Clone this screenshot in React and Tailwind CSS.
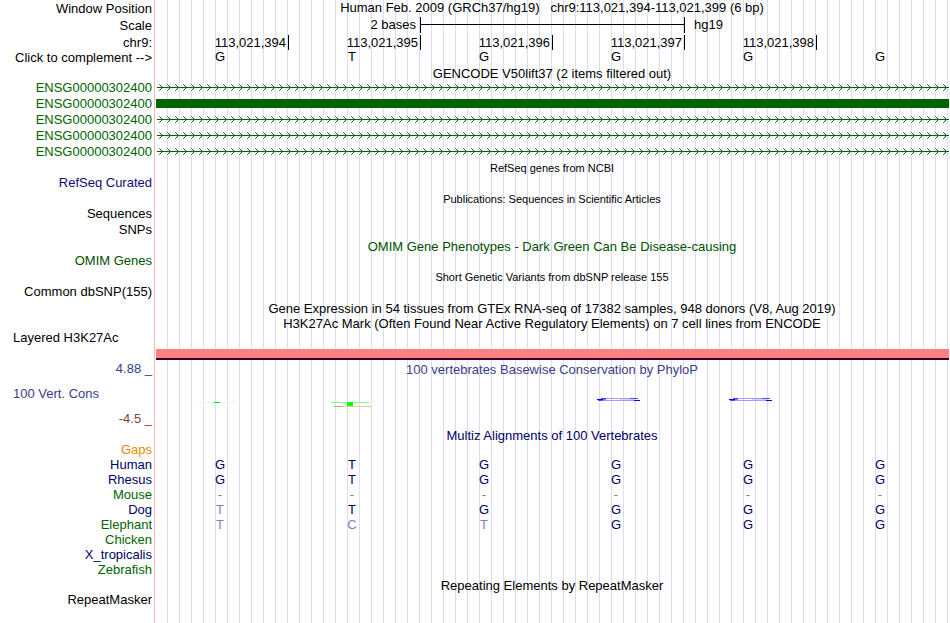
import React, { useState } from 'react';

const complement = { G: 'C', C: 'G', A: 'T', T: 'A' };
const bases = ['G', 'T', 'G', 'G', 'G', 'G'];
const positions = ['113,021,394', '113,021,395', '113,021,396', '113,021,397', '113,021,398', ''];
const geneRows = ['line', 'block', 'line', 'line', 'line'];

const NAVY = 'text-[#000064]';
const GREEN = 'text-[#006400]';

const species = [
  { name: 'Gaps', color: 'text-[#e68a00]', seq: '      ' },
  { name: 'Human', color: NAVY, seq: 'GTGGGG' },
  { name: 'Rhesus', color: NAVY, seq: 'GTGGGG' },
  { name: 'Mouse', color: GREEN, seq: '------' },
  { name: 'Dog', color: NAVY, seq: 'TTGGGG' },
  { name: 'Elephant', color: GREEN, seq: 'TCTGGG' },
  { name: 'Chicken', color: GREEN, seq: '      ' },
  { name: 'X_tropicalis', color: NAVY, seq: '      ' },
  { name: 'Zebrafish', color: GREEN, seq: '      ' },
];

// bases that differ from the human sequence are faded
const baseColor = (letter, index) => {
  if (letter === '-') return 'text-[#808080]';
  return letter === bases[index] ? NAVY : 'text-[#8080b4]';
};

const Row = ({ label, labelClass = '', height = 'h-4', children }) => (
  <div className={`flex ${height}`}>
    <div className={`w-[156px] shrink-0 pr-1 text-right ${labelClass}`}>{label}</div>
    <div className="min-w-0 flex-1 pr-0.5">{children}</div>
  </div>
);

const Title = ({ children, className = '' }) => (
  <h2 className={`h-[15px] pl-[156px] pr-0.5 text-center leading-[17px] ${className}`}>{children}</h2>
);

const Intron = () => (
  <svg className="block h-[15px] w-full" shapeRendering="crispEdges" aria-hidden="true">
    <defs>
      <pattern id="chevrons" width="8" height="15" patternUnits="userSpaceOnUse">
        <path d="M4 5h1v1h-1zM5 6h1v1h-1zM5 8h1v1h-1zM4 9h1v1h-1z" fill="#006400" />
        <path d="M3 4h1v1h-1zM3 10h1v1h-1z" fill="#5a965a" />
      </pattern>
    </defs>
    <rect width="100%" height="15" fill="url(#chevrons)" />
    <rect x="1" y="7" width="100%" height="1" fill="#006400" />
  </svg>
);

const ConsLogo = ({ index }) => {
  if (index === 0) {
    return (
      <svg className="block h-[25px] w-full" shapeRendering="crispEdges" aria-hidden="true">
        <rect x="42" y="16" width="38" height="1" fill="#dcffdc" />
        <rect x="58" y="16" width="6" height="1" fill="#00e600" />
      </svg>
    );
  }
  if (index === 1) {
    return (
      <svg className="block h-[25px] w-full" shapeRendering="crispEdges" aria-hidden="true">
        <rect x="43" y="16" width="38" height="1" fill="#78ff78" />
        <rect x="59" y="16" width="6" height="4" fill="#00ff00" />
        <rect x="46" y="20" width="38" height="1" fill="#d2d2a0" />
        <rect x="46" y="20" width="8" height="1" fill="#b4b450" />
      </svg>
    );
  }
  if (index === 3 || index === 4) {
    return (
      <svg className="block h-[25px] w-full" shapeRendering="crispEdges" aria-hidden="true">
        <rect x="50" y="12" width="34" height="1" fill="#a0a0ff" />
        <rect x="49" y="12" width="5" height="1" fill="#5050ff" />
        <rect x="78" y="12" width="8" height="1" fill="#5050ff" />
        <rect x="45" y="13" width="6" height="1" fill="#0000ff" />
        <rect x="51" y="13" width="3" height="1" fill="#7878ff" />
        <rect x="68" y="13" width="16" height="1" fill="#d2d2ff" />
        <rect x="47" y="14" width="36" height="1" fill="#a0a0ff" />
        <rect x="46" y="14" width="5" height="1" fill="#5050ff" />
        <rect x="82" y="14" width="6" height="1" fill="#0000ff" />
      </svg>
    );
  }
  return <span />;
};

const App = () => {
  const [flipped, setFlipped] = useState(false);

  return (
    <main className="min-h-screen bg-white bg-[image:linear-gradient(#ffb4b4,#ffb4b4),repeating-linear-gradient(to_right,transparent_0_11px,#dcdcf5_11px_12px)] bg-[length:1px_100%,100%_100%] bg-[position:154px_0,156px_0] bg-no-repeat font-['Liberation_Sans',Arial,sans-serif] text-[13px] leading-[15px] whitespace-nowrap text-black">
      <Row label="Window Position" labelClass="leading-[17px]" height="h-[17px]">
        <h1 className="text-center whitespace-pre">Human Feb. 2009 (GRCh37/hg19)   chr9:113,021,394-113,021,399 (6 bp)</h1>
      </Row>
      <Row label="Scale" labelClass="leading-[17px]" height="h-[18px]">
        <div className="grid h-4 grid-cols-3">
          <span className="pr-1 text-right">2 bases</span>
          <span className="border-l border-black pt-[7px]">
            <span className="block h-px bg-black" />
          </span>
          <span className="border-l border-black pl-[9px]">hg19</span>
        </div>
      </Row>
      <Row label="chr9:" height="h-[15px]">
        <div className="grid h-3.5 grid-cols-6">
          {positions.map((position, index) => (
            <span key={index} className={`pr-0.5 text-right ${index > 0 ? 'border-l border-black' : ''}`}>
              {position}
            </span>
          ))}
        </div>
      </Row>
      <Row
        height="h-[15px]"
        label={<button type="button" className="cursor-pointer" onClick={() => setFlipped(!flipped)}>Click to complement --&gt;</button>}
      >
        <div className="grid grid-cols-6 leading-[13px]">
          {bases.map((base, index) => (
            <span key={index} className="pr-1 text-center">{flipped ? complement[base] : base}</span>
          ))}
        </div>
      </Row>

      <Title>GENCODE V50lift37 (2 items filtered out)</Title>
      {geneRows.map((kind, index) => (
        <div key={index} className="flex h-4 pr-px">
          <a href="#gene" className={`w-[156px] shrink-0 pr-1 text-right ${GREEN}`}>ENSG00000302400</a>
          <div className="min-w-0 flex-1">
            {kind === 'block' ? <div className="mt-[3px] h-[9px] bg-[#006400]" /> : <Intron />}
          </div>
        </div>
      ))}

      <Title className="text-[11px]">RefSeq genes from NCBI</Title>
      <Row label="RefSeq Curated" labelClass="text-[#0c0c78]" />
      <Title className="text-[11px]">Publications: Sequences in Scientific Articles</Title>
      <Row label="Sequences" />
      <Row label="SNPs" />
      <Title className="text-[#005000]">OMIM Gene Phenotypes - Dark Green Can Be Disease-causing</Title>
      <Row label="OMIM Genes" labelClass="text-[#005000]" />
      <Title className="text-[11px]">Short Genetic Variants from dbSNP release 155</Title>
      <Row label="Common dbSNP(155)" />
      <Title>Gene Expression in 54 tissues from GTEx RNA-seq of 17382 samples, 948 donors (V8, Aug 2019)</Title>
      <Title>H3K27Ac Mark (Often Found Near Active Regulatory Elements) on 7 cell lines from ENCODE</Title>

      <div className="h-[19px] pl-[13px]">Layered H3K27Ac</div>
      <div className="mb-px pl-[156px] pr-px">
        <div className="h-[11px] border-b-2 border-[#320032] bg-[#ff8080]" />
      </div>

      <Row label="4.88 _" labelClass="text-[#3c3c8c]" height="h-[25px]">
        <h2 className="text-center leading-[17px] text-[#3c3c8c]">100 vertebrates Basewise Conservation by PhyloP</h2>
      </Row>
      <div className="flex h-[25px] pr-0.5">
        <div className="w-[156px] shrink-0 pl-[13px] text-[#3c3c8c]">100 Vert. Cons</div>
        <div className="grid min-w-0 flex-1 grid-cols-6">
          {bases.map((base, index) => <ConsLogo key={index} index={index} />)}
        </div>
      </div>
      <Row label="-4.5 _" labelClass="text-[#8c3c3c]" />

      <Title className={NAVY}>Multiz Alignments of 100 Vertebrates</Title>
      <div className="pr-0.5">
        <table className="w-full table-fixed">
          <tbody>
            {species.map(({ name, color, seq }) => (
              <tr key={name} className="h-[15px]">
                <th scope="row" className={`w-[156px] p-0 pr-1 text-right font-normal ${color}`}>{name}</th>
                {seq.split('').map((letter, index) => (
                  <td key={index} className={`p-0 pr-1 text-center ${baseColor(letter, index)}`}>{letter}</td>
                ))}
              </tr>
            ))}
          </tbody>
        </table>
      </div>

      <Title>Repeating Elements by RepeatMasker</Title>
      <Row label="RepeatMasker" />
    </main>
  );
};

export default App;
